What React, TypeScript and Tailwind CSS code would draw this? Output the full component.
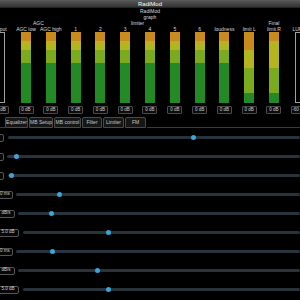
import React from 'react';

type Meter = {
  label: string;
  value: string;
  // [orange, yellow, lime, green] heights in px, or null for empty meter
  zones: number[] | null;
};

const meters: Meter[] = [
  { label: 'Input', value: '0 dB', zones: null },
  { label: 'AGC low', value: '0 dB', zones: [9, 9, 13, 40] },
  { label: 'AGC high', value: '0 dB', zones: [9, 9, 13, 40] },
  { label: '1', value: '0 dB', zones: [9, 9, 13, 40] },
  { label: '2', value: '0 dB', zones: [9, 9, 13, 40] },
  { label: '3', value: '0 dB', zones: [9, 9, 13, 40] },
  { label: '4', value: '0 dB', zones: [9, 9, 13, 40] },
  { label: '5', value: '0 dB', zones: [9, 9, 13, 40] },
  { label: '6', value: '0 dB', zones: [9, 9, 13, 40] },
  { label: 'loudness', value: '0 dB', zones: [9, 9, 13, 40] },
  { label: 'limit L', value: '0 dB', zones: [18, 18, 25, 10] },
  { label: 'limit R', value: '0 dB', zones: [9, 27, 25, 10] },
  { label: 'LUFS', value: '-60 dB', zones: null },
];

const zoneColors = ['bg-[#c98a1e]', 'bg-[#b4b41f]', 'bg-[#7aab1f]', 'bg-[#248a26]'];

const sliders = [
  { box: 'w-[20px] ml-[-16px]', text: '', track: 'ml-[4px]', thumb: 193 },
  { box: 'w-[20px] ml-[-16px]', text: '', track: 'ml-[3px]', thumb: 16 },
  { box: 'w-[20px] ml-[-16px]', text: '', track: 'ml-[4px]', thumb: 11 },
  { box: 'w-[16px] ml-[-3px]', text: '0 ms', track: 'ml-[3px]', thumb: 59 },
  { box: 'w-[18px] ml-[-3px]', text: 'dB/s', track: 'ml-[3px]', thumb: 51 },
  { box: 'w-[22px] ml-[-3px]', text: '5.0 dB', track: 'ml-[4px]', thumb: 108 },
  { box: 'w-[16px] ml-[-3px]', text: '0 ms', track: 'ml-[3px]', thumb: 52 },
  { box: 'w-[18px] ml-[-3px]', text: 'dB/s', track: 'ml-[3px]', thumb: 97 },
  { box: 'w-[22px] ml-[-3px]', text: '5.0 dB', track: 'ml-[4px]', thumb: 108 },
];

const tabs = [
  { name: 'Equalizer', w: 'w-[23px]' },
  { name: 'MB Setup', w: 'w-[24px]' },
  { name: 'MB control', w: 'w-[27px]' },
  { name: 'Filter', w: 'w-[20px]' },
  { name: 'Limiter', w: 'w-[21px]' },
  { name: 'FM', w: 'w-[21px]' },
];

export default function App() {
  return (
    <div
      className="w-[300px] h-[300px] overflow-hidden bg-black text-[#d8d8d8]"
      style={{ fontFamily: '"Liberation Sans", Arial, sans-serif' }}
    >
      {/* Title bar */}
      <div className="h-[8px] flex items-center justify-center bg-gradient-to-b from-[#5a5a5a] to-[#333333] border-b border-[#222]">
        <span className="text-[6px] leading-none text-white">RadiMod</span>
      </div>

      {/* Meter graph */}
      <div className="ml-[-11.2px] w-[322.4px] grid grid-cols-[repeat(13,24.8px)] text-[5px] leading-[6px] text-center">
        <div className="col-span-13 h-[6px]">RadiMod</div>
        <div className="col-span-13 h-[6px]">graph</div>
        <div className="h-[6px]" />
        <div className="col-span-2 h-[6px]">AGC</div>
        <div className="col-span-6 h-[6px]">limiter</div>
        <div className="h-[6px]" />
        <div className="col-span-3 h-[6px]">Final</div>
        {meters.map((m) => (
          <div key={m.label} className="h-[6px] whitespace-nowrap">
            {m.label}
          </div>
        ))}
        {meters.map((m) => (
          <div key={m.label + '-bar'} className="h-[71px] flex justify-center">
            {m.zones ? (
              <div className="w-[10px] flex flex-col">
                {m.zones.map((h, i) => (
                  <div key={i} className={zoneColors[i]} style={{ height: h }} />
                ))}
              </div>
            ) : (
              <div className="w-[8px] h-full border border-[#a0a0a0]" />
            )}
          </div>
        ))}
        {meters.map((m) => (
          <div key={m.label + '-val'} className="mt-[3px] h-[8px] flex justify-center">
            <div className="w-[15px] h-[8px] shrink-0 flex items-center justify-center whitespace-nowrap rounded-[1px] border border-[#4a4a4a] bg-[#0c0c0c] text-[4.5px] text-[#cfcfcf]">
              {m.value}
            </div>
          </div>
        ))}
      </div>

      {/* Tabs */}
      <div className="mt-[3px] h-[11px] flex items-end">
        <div className="w-[5px] h-full border-b border-[#3a3a3a]" />
        {tabs.map((t) => (
          <div
            key={t.name}
            className={`${t.w} h-[11px] mr-[1px] shrink-0 flex items-center justify-center whitespace-nowrap rounded-t-[2px] border border-[#4a4a4a] bg-[#161616] text-[5px] text-[#c8c8c8]`}
          >
            {t.name}
          </div>
        ))}
        <div className="flex-1 h-full border-b border-[#3a3a3a]" />
      </div>

      {/* Slider rows */}
      <div className="flex flex-col">
        {sliders.map((s, i) => (
          <div key={i} className="relative h-[19px] flex items-center">
            <div
              className={`${s.box} h-[8px] shrink-0 flex items-center justify-center whitespace-nowrap rounded-[2px] border border-[#555] bg-[#080808] text-[4.5px] text-[#d0d0d0]`}
            >
              {s.text}
            </div>
            <div className={`${s.track} flex-1 h-[3px] rounded-full bg-[#28343c]`} />
            <div
              className="absolute top-[7px] w-[5px] h-[5px] rounded-full bg-[#3ba4d8]"
              style={{ left: s.thumb - 2.5 }}
            />
          </div>
        ))}
      </div>
    </div>
  );
}
